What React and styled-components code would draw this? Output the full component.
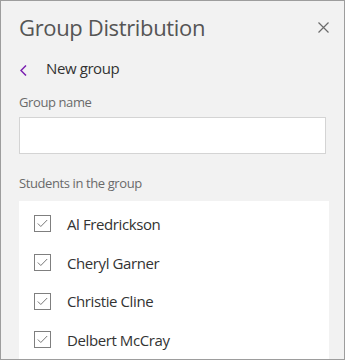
import React from "react";
import styled, { createGlobalStyle } from "styled-components";

const Global = createGlobalStyle`
  html, body { margin: 0; padding: 0; background: #f2f2f2; }
  body { font-family: "Open Sans", "Noto Sans", sans-serif; }
`;

const Panel = styled.div`
  box-sizing: border-box;
  width: 345px;
  height: 360px;
  border: 1px solid #9d9d9d;
  background: #f2f2f2;
  overflow: hidden;
  display: flex;
  flex-direction: column;
  padding: 11px 15px 0 18px;
`;

const Header = styled.div`
  display: flex;
  align-items: center;
  justify-content: space-between;
  height: 30px;
`;

const Title = styled.h1`
  margin: 0;
  font-size: 22px;
  line-height: 30px;
  font-weight: 400;
  letter-spacing: -0.35px;
  color: #555;
`;

const CloseButton = styled.button`
  border: 0;
  background: none;
  padding: 0;
  width: 11px;
  height: 11px;
  display: flex;
  cursor: pointer;
`;

const BackRow = styled.div`
  display: flex;
  align-items: center;
  margin-top: 16px;
  height: 20px;
  gap: 19px;
`;

const Chevron = styled.svg`
  margin-left: 1px;
  margin-top: 4px;
  flex: none;
`;

const SubTitle = styled.span`
  font-size: 15px;
  line-height: 20px;
  letter-spacing: -0.4px;
  color: #333;
`;

const Label = styled.div`
  font-size: 13px;
  line-height: 18px;
  letter-spacing: -0.4px;
  color: #6a6a6a;
  margin-top: ${(p) => p.$top}px;
`;

const Input = styled.input`
  box-sizing: border-box;
  width: 307px;
  height: 38px;
  margin-top: 6px;
  border: 1.5px solid #d4d4d4;
  background: #fff;
  outline: none;
  font: inherit;
`;

const List = styled.ul`
  list-style: none;
  margin: 9px 0 0;
  padding: 4px 0 0 15px;
  width: 310px;
  box-sizing: border-box;
  background: #fff;
  flex: 1;
`;

const Row = styled.li`
  display: flex;
  align-items: center;
  gap: 16px;
  height: 38.6px;
`;

const Box = styled.span`
  box-sizing: border-box;
  width: 17px;
  height: 17px;
  border: 1px solid #7f7f7f;
  display: flex;
  align-items: center;
  justify-content: center;
  flex: none;
`;

const Name = styled.span`
  font-size: 15px;
  line-height: 20px;
  letter-spacing: -0.4px;
  color: #333;
`;

const students = ["Al Fredrickson", "Cheryl Garner", "Christie Cline", "Delbert McCray"];

export default function App() {
  return (
    <>
      <Global />
      <Panel>
        <Header>
          <Title>Group Distribution</Title>
          <CloseButton aria-label="Close">
            <svg width="11" height="11" viewBox="0 0 11 11">
              <path d="M0.5 0.5L10.5 10.5M10.5 0.5L0.5 10.5" stroke="#6b6b6b" strokeWidth="1.2" fill="none" />
            </svg>
          </CloseButton>
        </Header>
        <BackRow>
          <Chevron width="7" height="11" viewBox="0 0 7 11">
            <path d="M6 0.5L1 5.5L6 10.5" stroke="#7a1fb0" strokeWidth="1.5" fill="none" />
          </Chevron>
          <SubTitle>New group</SubTitle>
        </BackRow>
        <Label $top={15}>Group name</Label>
        <Input />
        <Label $top={20}>Students in the group</Label>
        <List>
          {students.map((s) => (
            <Row key={s}>
              <Box>
                <svg width="11" height="9" viewBox="0 0 11 9">
                  <path d="M0.8 4.5L3.8 7.5L10.2 1" stroke="#777" strokeWidth="1" fill="none" />
                </svg>
              </Box>
              <Name>{s}</Name>
            </Row>
          ))}
        </List>
      </Panel>
    </>
  );
}
